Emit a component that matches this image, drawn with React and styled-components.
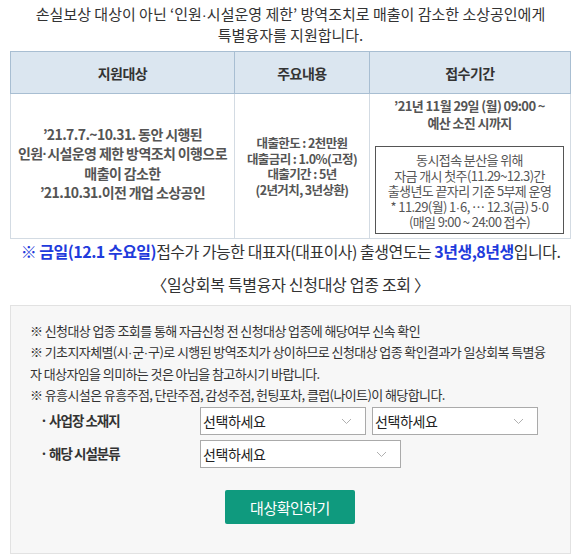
import React from 'react';
import { styled, createGlobalStyle } from 'styled-components';

const GlobalStyle = createGlobalStyle`
  body {
    margin: 0;
    background: #fff;
    font-family: "Noto Sans CJK KR", "Noto Sans", sans-serif;
    color: #333;
  }
`;

// 가운뎃점은 CJK 폰트에서 전각이라 좁은 라틴 폰트로 표시
const Mid = () => <Dot>·</Dot>;

function Chevron() {
  return (
    <svg width="11" height="7" viewBox="0 0 11 7" fill="none">
      <path d="M1 1 L5.5 5.5 L10 1" stroke="#b0b0b0" strokeWidth="1" />
    </svg>
  );
}

function Select({ width }) {
  return (
    <SelectBox $width={width}>
      <span>선택하세요</span>
      <Chevron />
    </SelectBox>
  );
}

export default function App() {
  return (
    <Page>
      <GlobalStyle />
      <Title>
        손실보상 대상이 아닌 ‘인원<Mid />시설운영 제한’ 방역조치로 매출이 감소한 소상공인에게
        <br />
        특별융자를 지원합니다.
      </Title>

      <InfoTable>
        <colgroup>
          <col style={{ width: '224px' }} />
          <col style={{ width: '135px' }} />
          <col />
        </colgroup>
        <thead>
          <tr>
            <HeadCell>지원대상</HeadCell>
            <HeadCell>주요내용</HeadCell>
            <HeadCell>접수기간</HeadCell>
          </tr>
        </thead>
        <tbody>
          <tr>
            <TargetCell>
              ’21.7.7.~10.31. 동안 시행된<br />
              인원<Mid />시설운영 제한 방역조치 이행으로<br />
              매출이 감소한<br />
              ’21.10.31.이전 개업 소상공인
            </TargetCell>
            <ContentCell>
              대출한도 : 2천만원<br />
              대출금리 : 1.0%(고정)<br />
              대출기간 : 5년<br />
              (2년거치, 3년상환)
            </ContentCell>
            <PeriodCell>
              <PeriodText>
                ’21년 11월 29일 (월) 09:00 ~<br />
                예산 소진 시까지
              </PeriodText>
              <NoticeBox>
                <NoticeLine>동시접속 분산을 위해</NoticeLine>
                <NoticeLine>자금 개시 첫주(11.29~12.3)간</NoticeLine>
                <NoticeLine>출생년도 끝자리 기준 5부제 운영</NoticeLine>
                <NoticeLine>* 11.29(월) 1<Mid />6, … 12.3(금) 5<Mid />0</NoticeLine>
                <NoticeLine>(매일 9:00 ~ 24:00 접수)</NoticeLine>
              </NoticeBox>
            </PeriodCell>
          </tr>
        </tbody>
      </InfoTable>

      <TodayNotice>
        <Blue>※ 금일(12.1 수요일)</Blue>접수가 가능한 대표자(대표이사) 출생연도는 <Blue>3년생,8년생</Blue>입니다.
      </TodayNotice>

      <SectionTitle>〈일상회복 특별융자 신청대상 업종 조회 〉</SectionTitle>

      <LookupBox>
        <NoteList>
          <li>※ 신청대상 업종 조회를 통해 자금신청 전 신청대상 업종에 해당여부 신속 확인</li>
          <li>※ 기초지자체별(시<Mid />군<Mid />구)로 시행된 방역조치가 상이하므로 신청대상 업종 확인결과가 일상회복 특별융자 대상자임을 의미하는 것은 아님을 참고하시기 바랍니다.</li>
          <li>※ 유흥시설은 유흥주점, 단란주점, 감성주점, 헌팅포차, 클럽(나이트)이 해당합니다.</li>
        </NoteList>

        <FormRows>
          <FormRow>
            <FieldLabel>· 사업장 소재지</FieldLabel>
            <Select width={166} />
            <Select width={166} />
          </FormRow>
          <FormRow>
            <FieldLabel>· 해당 시설분류</FieldLabel>
            <Select width={201} />
          </FormRow>
        </FormRows>

        <ButtonRow>
          <CheckButton type="button">대상확인하기</CheckButton>
        </ButtonRow>
      </LookupBox>
    </Page>
  );
}

const Page = styled.div`
  width: 582px;
  padding: 4px 11px 0 10px;
  box-sizing: border-box;
`;

const Dot = styled.span`
  font-family: "Liberation Sans", sans-serif;
  letter-spacing: 0;
`;

const Title = styled.p`
  margin: 0 0 6px;
  text-align: center;
  font-size: 15px;
  line-height: 20px;
  letter-spacing: 0;
  color: #333;
`;

const InfoTable = styled.table`
  width: 100%;
  border-collapse: collapse;
  table-layout: fixed;
  border: 1px solid #d3dbe3;
`;

const HeadCell = styled.th`
  height: 41px;
  padding: 0;
  background: #dbe6f0;
  border: 1px solid #a8bed2;
  font-size: 14px;
  font-weight: 700;
  color: #333;
  letter-spacing: -0.5px;
`;

const BodyCell = styled.td`
  border: 1px solid #d3dbe3;
  text-align: center;
  color: #555;
  font-weight: 700;
  letter-spacing: -0.6px;
  padding: 0;
`;

const TargetCell = styled(BodyCell)`
  font-size: 14px;
  line-height: 19px;
  padding-bottom: 6px;
`;

const ContentCell = styled(BodyCell)`
  font-size: 12.5px;
  line-height: 15.5px;
`;

const PeriodCell = styled(BodyCell)`
  vertical-align: top;
  padding: 3px 6px 4px 5px;
`;

const PeriodText = styled.div`
  font-size: 13px;
  line-height: 17px;
`;

const NoticeBox = styled.div`
  margin-top: 15px;
  height: 88px;
  box-sizing: border-box;
  border: 1px solid #555;
  padding: 5px 0 0;
  display: flex;
  flex-direction: column;
`;

const NoticeLine = styled.div`
  height: 15.5px;
  line-height: 15.5px;
  font-size: 13px;
  font-weight: 400;
  color: #555;
  white-space: nowrap;
`;

const TodayNotice = styled.p`
  margin: 1px 0 0;
  text-align: center;
  font-size: 16px;
  line-height: 22px;
  letter-spacing: -0.5px;
  color: #333;
`;

const Blue = styled.strong`
  color: #1f3bdc;
  font-weight: 700;
`;

const SectionTitle = styled.p`
  margin: 11px 0 0;
  text-align: center;
  font-size: 16px;
  line-height: 22px;
  letter-spacing: -0.3px;
  color: #333;
`;

const LookupBox = styled.div`
  margin-top: 10px;
  height: 249px;
  box-sizing: border-box;
  background: #f7f7f7;
  border: 1px solid #e2e2e2;
  padding: 14px 20px 0 19px;
`;

const NoteList = styled.ul`
  margin: 0;
  padding: 0 2px 0 0;
  list-style: none;
  font-size: 13px;
  line-height: 21px;
  letter-spacing: -0.6px;
  color: #333;
  word-break: break-all;
`;

const FormRows = styled.div`
  display: flex;
  flex-direction: column;
  gap: 5px;
  margin-top: 2px;
`;

const FormRow = styled.div`
  display: flex;
  align-items: center;
  gap: 6px;
`;

const FieldLabel = styled.span`
  width: 164px;
  padding: 0 0 2px 10px;
  box-sizing: border-box;
  font-size: 13.5px;
  font-weight: 700;
  letter-spacing: -1px;
  color: #333;
`;

const SelectBox = styled.div`
  width: ${(p) => p.$width}px;
  height: 28px;
  box-sizing: border-box;
  display: flex;
  align-items: center;
  justify-content: space-between;
  padding: 0 13px 0 2px;
  background: #fff;
  border: 1px solid #aaa;
  font-size: 14px;
  color: #222;
  letter-spacing: -0.4px;
`;

const ButtonRow = styled.div`
  display: flex;
  justify-content: center;
  margin-top: 22px;
`;

const CheckButton = styled.button`
  width: 130px;
  height: 34px;
  border: none;
  border-radius: 2px;
  background: #0f9a7e;
  color: #fff;
  font-family: inherit;
  font-size: 15px;
  letter-spacing: -0.5px;
  cursor: pointer;
`;
